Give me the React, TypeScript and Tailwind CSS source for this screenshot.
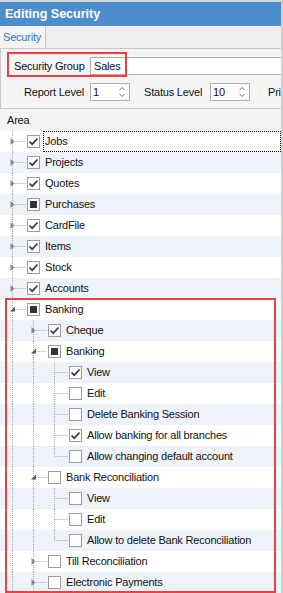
import { memo } from "react";

type CheckState = "on" | "off" | "mixed";
type Expander = "none" | "open" | "closed";

type Row = {
  label: string;
  level: number;
  state: CheckState;
  expander: Expander;
  last?: boolean;
  first?: boolean;
  focused?: boolean;
};

const rows: Row[] = [
  { label: "Jobs", level: 0, state: "on", expander: "closed", focused: true },
  { label: "Projects", level: 0, state: "on", expander: "closed" },
  { label: "Quotes", level: 0, state: "on", expander: "closed" },
  { label: "Purchases", level: 0, state: "mixed", expander: "closed" },
  { label: "CardFile", level: 0, state: "on", expander: "closed" },
  { label: "Items", level: 0, state: "on", expander: "closed" },
  { label: "Stock", level: 0, state: "on", expander: "closed" },
  { label: "Accounts", level: 0, state: "on", expander: "closed" },
  { label: "Banking", level: 0, state: "mixed", expander: "open" },
  { label: "Cheque", level: 1, state: "on", expander: "closed" },
  { label: "Banking", level: 1, state: "mixed", expander: "open" },
  { label: "View", level: 2, state: "on", expander: "none" },
  { label: "Edit", level: 2, state: "off", expander: "none" },
  { label: "Delete Banking Session", level: 2, state: "off", expander: "none" },
  { label: "Allow banking for all branches", level: 2, state: "on", expander: "none" },
  { label: "Allow changing default account", level: 2, state: "off", expander: "none", last: true },
  { label: "Bank Reconciliation", level: 1, state: "off", expander: "open" },
  { label: "View", level: 2, state: "off", expander: "none" },
  { label: "Edit", level: 2, state: "off", expander: "none" },
  { label: "Allow to delete Bank Reconciliation", level: 2, state: "off", expander: "none", last: true },
  { label: "Till Reconciliation", level: 1, state: "off", expander: "closed" },
  { label: "Electronic Payments", level: 1, state: "off", expander: "closed" },
];

const LINE = "#a8a8a8";

const TreeLines = ({ level, expander, last }: { level: number; expander: Expander; last?: boolean }) => {
  const w = 21 * (level + 1) + 4;
  const c = 21 * level + 10.5;
  return (
    <svg width={w} height={21} className="shrink-0">
      {Array.from({ length: level }).map((_, i) => (
        <line key={i} x1={21 * i + 10.5} y1={0} x2={21 * i + 10.5} y2={21} stroke={LINE} strokeDasharray="1 1" />
      ))}
      <line x1={c} y1={0} x2={c} y2={last ? 10.5 : 21} stroke={LINE} strokeDasharray="1 1" />
      <line x1={c + 1} y1={10.5} x2={w - 1} y2={10.5} stroke={LINE} strokeDasharray="1 1" />
      {expander === "closed" && (
        <path d={`M${c - 2} ${7} L${c + 2} ${10.5} L${c - 2} ${14} Z`} fill="#8a8a8a" />
      )}
      {expander === "open" && (
        <path d={`M${c + 2.5} ${7.5} L${c + 2.5} ${12.5} L${c - 2.5} ${12.5} Z`} fill="#5a5a5a" />
      )}
    </svg>
  );
};

const CheckBox = ({ state }: { state: CheckState }) => (
  <div className="w-[13px] h-[13px] border border-[#9c9c9c] bg-white shrink-0 flex items-center justify-center">
    {state === "on" && (
      <svg width="11" height="11" viewBox="0 0 11 11">
        <path d="M1.5 5.5 L4.2 8.2 L9.5 2.5" fill="none" stroke="#3a3a3a" strokeWidth="1.7" />
      </svg>
    )}
    {state === "mixed" && <div className="w-[7px] h-[7px] bg-[#333]" />}
  </div>
);

const TreeRow = memo(({ row, idx }: { row: Row; idx: number }) => (
  <div className={`h-[21px] flex items-center pl-[2px] ${idx % 2 === 1 ? "bg-[#eef2f9]" : "bg-white"}`}>
    <TreeLines level={row.level} expander={row.expander} last={row.last} />
    <CheckBox state={row.state} />
    <div
      className={`flex-1 h-[21px] flex items-center pl-[1px] ml-[3px] border border-dotted ${
        row.focused ? "border-black" : "border-transparent"
      }`}
    >
      {row.label}
    </div>
  </div>
));

const Spinner = () => (
  <svg width="8" height="14" viewBox="0 0 8 14" className="shrink-0">
    <path d="M1.5 5 L4 2.5 L6.5 5" fill="none" stroke="#6a6a6a" strokeWidth="1" />
    <path d="M1.5 9 L4 11.5 L6.5 9" fill="none" stroke="#6a6a6a" strokeWidth="1" />
  </svg>
);

const SpinInput = ({ value }: { value: string }) => (
  <div className="w-[40px] h-[18px] border border-[#abadb3] bg-white flex items-center justify-between pl-[2px] pr-[3px]">
    <span>{value}</span>
    <Spinner />
  </div>
);

export default function App() {
  return (
    <div
      className="w-[283px] h-[593px] bg-white relative overflow-hidden border-r-2 border-[#d0d0d0] text-[11px] tracking-[-0.2px] text-[#111]"
      style={{ fontFamily: '"Liberation Sans", Arial, sans-serif' }}
    >
      <div className="h-[2px] bg-[#d6d6d6]" />
      <div className="h-[24px] bg-[#4c8dcc] text-white font-bold text-[12.5px] tracking-normal flex items-center pl-[5px]">
        Editing Security
      </div>
      <div className="h-[22px] bg-[#eeeeee] flex items-end">
        <div className="h-[22px] w-[46px] bg-[#f5f5f5] border-r border-[#c8c8c8] text-[#2a74c0] flex items-center pl-[3px]">
          Security
        </div>
      </div>
      <div className="h-[61px] bg-[#f5f5f5] border-t border-l border-b border-[#c8c8c8] flex flex-col">
        <div className="flex items-center mt-[8px] pl-[13px]">
          <div className="w-[76px]">Security Group</div>
          <div className="flex-1 h-[18px] border border-[#abadb3] bg-white flex items-center pl-[3px] -mr-[10px]">Sales</div>
        </div>
        <div className="flex items-center mt-[8px] pl-[23px]">
          <div className="w-[66px]">Report Level</div>
          <SpinInput value="1" />
          <div className="ml-[14px] w-[66px]">Status Level</div>
          <SpinInput value="10" />
          <div className="ml-[18px]">Pri</div>
        </div>
      </div>
      <div className="h-[22px] bg-[#f4f4f4] flex items-center pl-[7px]">Area</div>
      <div>
        {rows.map((r, i) => (
          <TreeRow key={i} row={r} idx={i} />
        ))}
      </div>
      <div className="absolute left-[7px] top-[52px] w-[120px] h-[25px] border-2 border-[#ef3f3f]" />
      <div className="absolute left-[5px] top-[298px] w-[271px] h-[295px] border-2 border-[#ef3f3f]" />
    </div>
  );
}
